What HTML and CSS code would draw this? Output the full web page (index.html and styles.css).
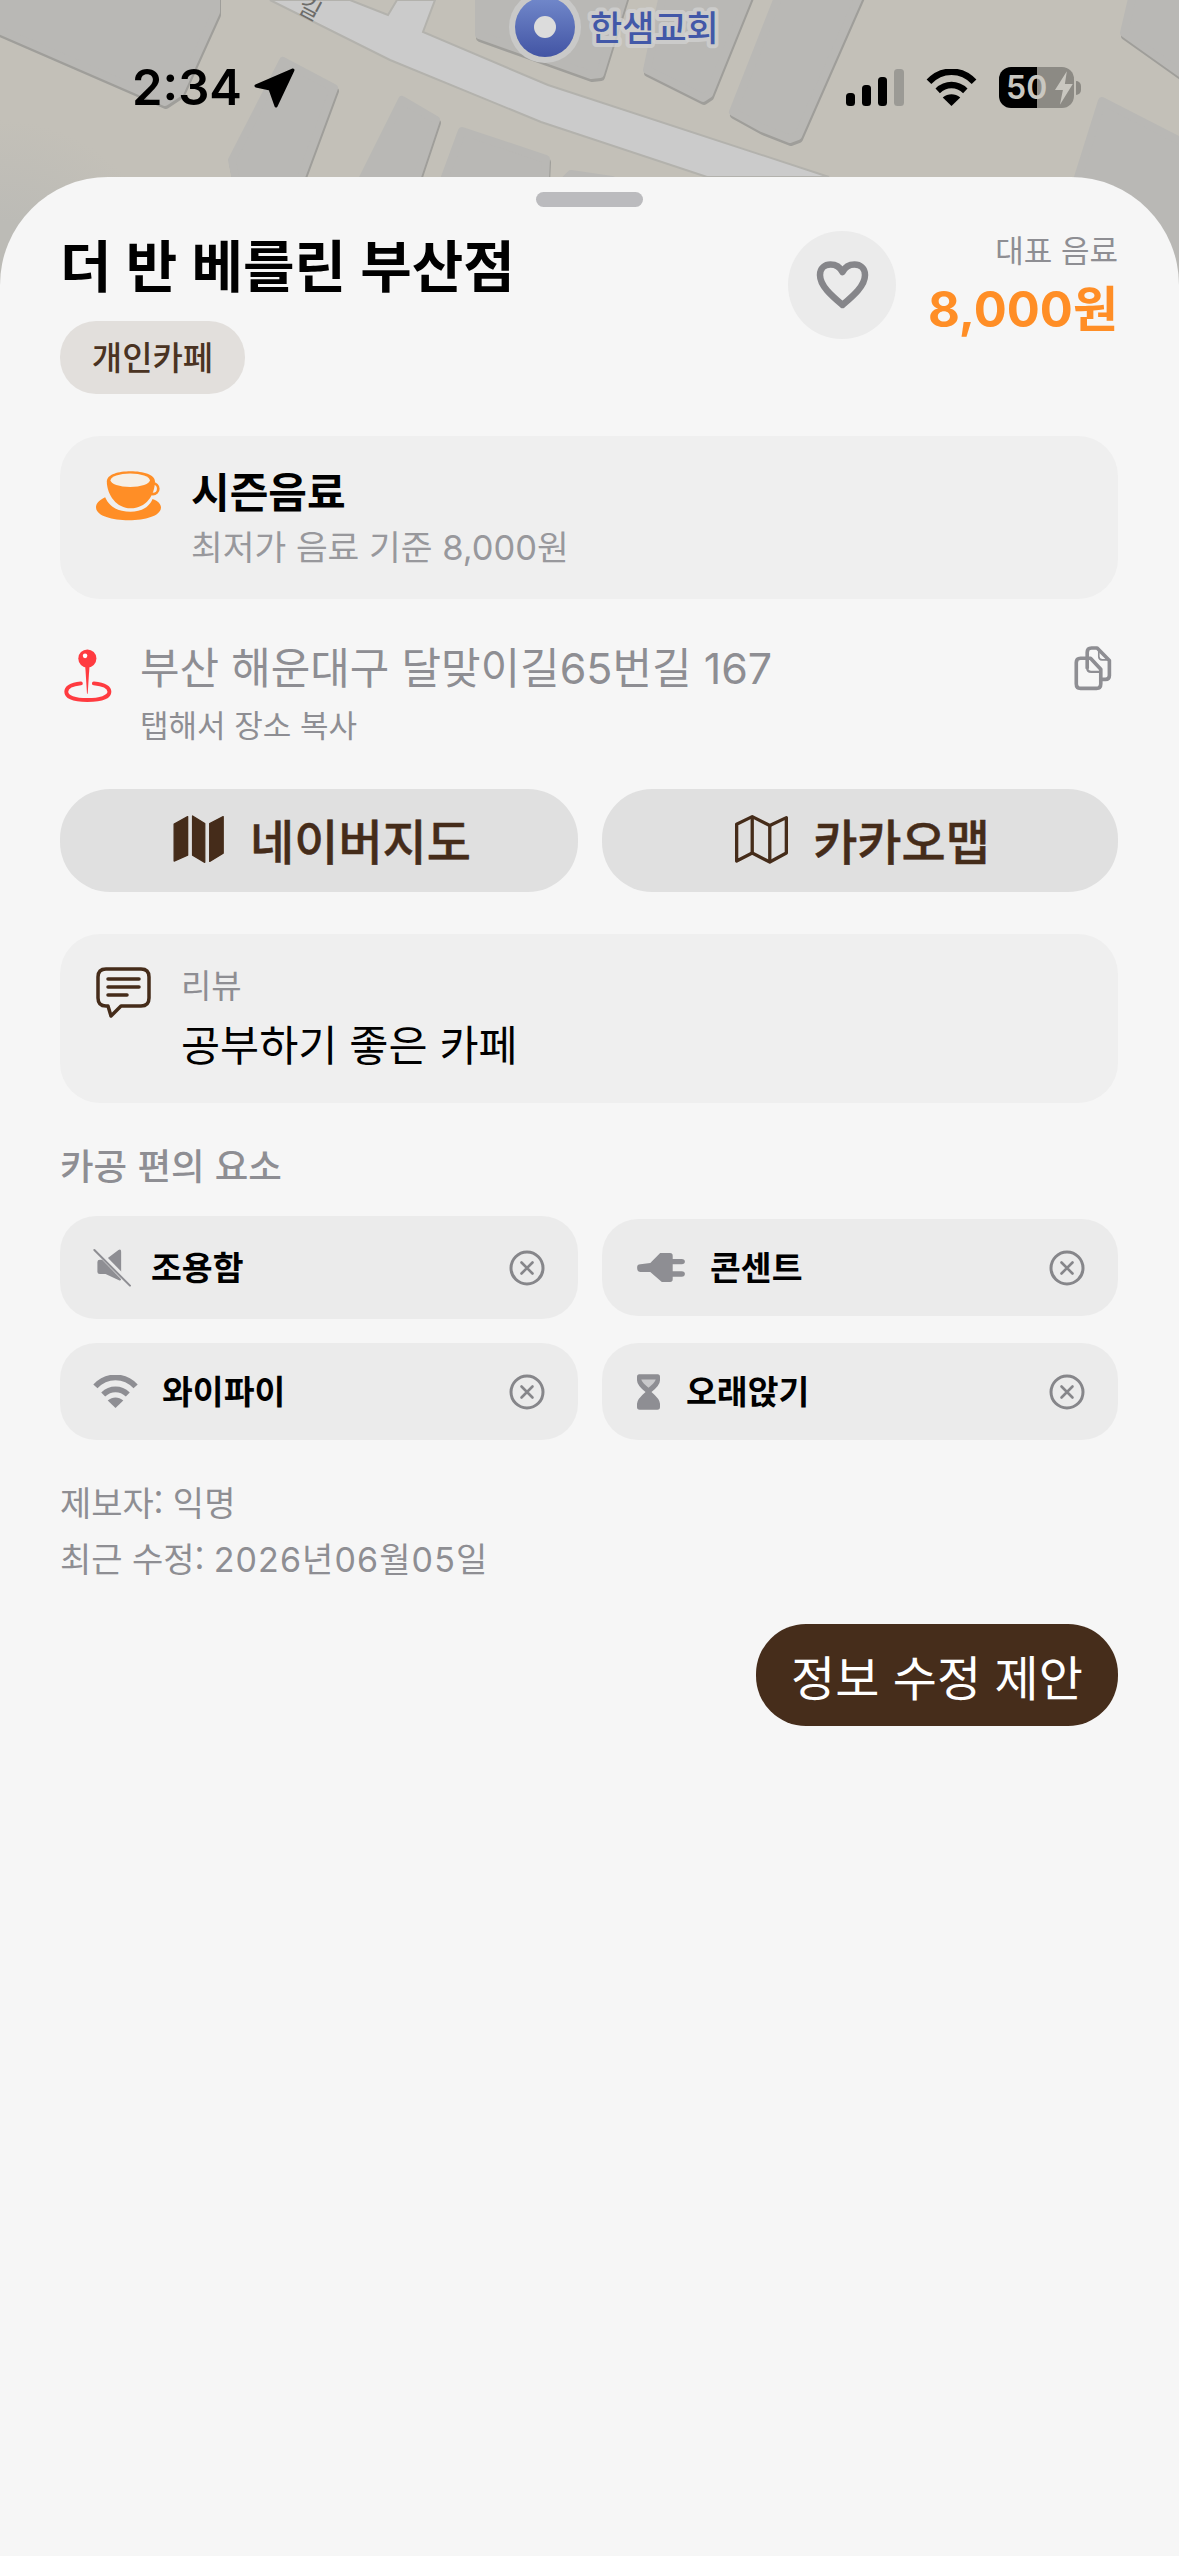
FILE: index.html
```html
<!DOCTYPE html>
<html lang="ko">

<head>
    <meta charset="UTF-8" />
    <title>더 반 베를린 부산점</title>
    <link rel="stylesheet" href="styles.css">
</head>

<body>
    <svg class="defs" width="0" height="0">
        <symbol id="wifi" viewBox="0 0 150 110">
            <path d="M8 38C45 -2 105 -2 142 38" fill="none" stroke="currentColor" stroke-width="19" />
            <path d="M34 65C58 42 92 42 116 65" fill="none" stroke="currentColor" stroke-width="19" />
            <path d="M75 110L49 85C65 72 85 72 101 85Z" fill="currentColor" />
        </symbol>
        <symbol id="close" viewBox="0 0 36 36">
            <circle cx="18" cy="18" r="16" fill="none" stroke="#86868a" stroke-width="3" />
            <path d="M12.5 12.5L23.5 23.5M23.5 12.5L12.5 23.5" stroke="#86868a" stroke-width="2.6" stroke-linecap="round" />
        </symbol>
    </svg>

    <div class="screen">
        <!-- 지도 배경 -->
        <svg class="map" viewBox="0 0 1179 320" width="1179" height="320">
            <defs>
                <linearGradient id="marker" x1="0" y1="0" x2="0" y2="1">
                    <stop offset="0" stop-color="#7289cb" />
                    <stop offset="1" stop-color="#4254a4" />
                </linearGradient>
                <radialGradient id="corner" gradientUnits="userSpaceOnUse" cx="0" cy="290" r="170">
                    <stop offset="0.4" stop-color="#bcbbb6" />
                    <stop offset="1" stop-color="#bcbbb6" stop-opacity="0" />
                </radialGradient>
                <g id="blocks" stroke-width="8" stroke-linejoin="round">
                    <polygon points="-10,-10 -10,26 165,102 180,92 216,12 216,-10" />
                    <polygon points="283,61 334,88 300,180 236,180 232,160" />
                    <polygon points="402,100 436,120 416,180 362,180" />
                    <polygon points="462,131 546,159 545,180 444,180" />
                    <polygon points="571,174 612,180 565,180" />
                    <polygon points="479,-10 479,35 591,75 600,74 626,-10" />
                    <polygon points="664,-10 647,70 703,98 709,94 751,-10" />
                    <polygon points="781,-10 733,112 762,128 790,139 798,136 862,-10" />
                    <polygon points="1134,-10 1124,33 1190,80 1190,-10" />
                    <polygon points="1102,101 1190,146 1190,330 1030,330" />
                </g>
            </defs>
            <rect width="1179" height="320" fill="#c3c0b8" />
            <rect y="120" width="170" height="200" fill="url(#corner)" />
            <polygon points="270,0 390,60 541,122 707,177 829,177 548,85 423,32 435,0 397,0 388,15 350,0" fill="#cbcbcb" stroke="#b3b2ad" stroke-width="2" />
            <use href="#blocks" x="1" y="3" fill="#9f9e9a" stroke="#9f9e9a" />
            <use href="#blocks" fill="#b9b8b5" stroke="#b9b8b5" />
            <text class="map-road" transform="translate(296 11) rotate(28)">길</text>
            <circle cx="545" cy="27" r="36" fill="#c9c9c8" />
            <circle cx="545" cy="27" r="30" fill="url(#marker)" />
            <circle cx="545" cy="27" r="11" fill="#dcdcdc" />
            <text class="map-label" x="590" y="41">한샘교회</text>
        </svg>

        <div class="status">
            <div class="status-left">
                <span class="time">2:34</span>
                <svg class="arrow" viewBox="-2 -2 43 42" width="43" height="42">
                    <polygon points="38,1 1,17 15,20 21,37" fill="#000" stroke="#000" stroke-width="3" stroke-linejoin="round" />
                </svg>
            </div>
            <div class="status-right">
                <svg class="signal" viewBox="0 0 58 37" width="58" height="37">
                    <rect x="0" y="24" width="9" height="13" rx="3.5" />
                    <rect x="16" y="16" width="9" height="21" rx="3.5" />
                    <rect x="32" y="8" width="9" height="29" rx="3.5" />
                    <rect x="48" y="0" width="10" height="37" rx="3.5" fill="#9b9a95" />
                </svg>
                <svg class="status-wifi" width="51" height="37">
                    <use href="#wifi" />
                </svg>
                <div class="battery">
                    <span>50</span>
                    <svg viewBox="0 0 20 34" width="22" height="36">
                        <polygon points="13,0 1,19 9,19 6,34 19,13 11,13" fill="#c9c7c0" />
                    </svg>
                </div>
                <div class="battery-cap"></div>
            </div>
        </div>

        <div class="sheet">
            <div class="handle"></div>

            <div class="head">
                <div class="head-main">
                    <h1 class="title">더 반 베를린 부산점</h1>
                    <span class="tag">개인카페</span>
                </div>
                <button class="like">
                    <svg viewBox="0 0 53 48" width="53" height="48">
                        <path d="M26.5 44C16 35 4 25 4 14C4 7 9 3.5 14.5 3.5C19.5 3.5 24 6 26.5 11C29 6 33.5 3.5 38.5 3.5C44 3.5 49 7 49 14C49 25 37 35 26.5 44Z" fill="none" stroke="#86868a" stroke-width="6.5" stroke-linejoin="round" />
                    </svg>
                </button>
                <div class="price">
                    <div class="price-label">대표 음료</div>
                    <div class="price-value"><span class="num">8,000</span>원</div>
                </div>
            </div>

            <div class="card card-drink">
                <svg class="cup" viewBox="48 85 192 150" width="65" height="51">
                    <path d="M75 165C55 175 48 185 48 195C48 220 95 233 145 233C195 233 240 220 240 195C240 185 230 175 215 170C205 195 180 208 150 208C115 208 88 195 75 165Z" fill="#ff8e26" />
                    <circle cx="216" cy="140" r="16" fill="none" stroke="#ff8e26" stroke-width="8" />
                    <path d="M80 118C80 97 115 88 150 88C188 88 222 98 222 118C222 160 195 198 150 198C110 198 80 160 80 118Z" fill="#ff8e26" />
                    <ellipse cx="149" cy="115" rx="58" ry="20" fill="#f5efe6" />
                </svg>
                <div>
                    <div class="drink-name">시즌음료</div>
                    <div class="drink-sub">최저가 음료 기준 <span class="num">8,000</span>원</div>
                </div>
            </div>

            <div class="place">
                <svg class="pin" viewBox="10 52 148 164" width="48" height="54">
                    <path d="M75 100H89L83 192H81Z" fill="#ff3b40" />
                    <circle cx="82" cy="83" r="28" fill="#ff3b40" />
                    <circle cx="75" cy="75" r="7" fill="#fff" />
                    <path d="M62 160C32 163 17 173 17 186C17 203 45 211 82 211C120 211 150 203 150 186C150 173 133 163 102 160" fill="none" stroke="#ff3b40" stroke-width="12" stroke-linecap="round" />
                </svg>
                <div class="place-text">
                    <div class="address">부산 해운대구 달맞이길<span class="num">65</span>번길 <span class="num">167</span></div>
                    <div class="copy-hint">탭해서 장소 복사</div>
                </div>
                <svg class="copy" viewBox="1125 70 125 145" width="42" height="48" fill="none" stroke="#8e8e93" stroke-width="11" stroke-linejoin="round">
                    <path d="M1170 145V95Q1170 82 1183 82H1200L1237 120V165Q1237 177 1225 177H1211" />
                    <path d="M1170 113H1180L1211 146V190Q1211 204 1198 204H1150Q1137 204 1137 190V126Q1137 113 1150 113Z" />
                    <path d="M1170 113V143Q1170 154 1182 154H1211" stroke-width="7" />
                    <path d="M1205 88V108Q1205 118 1215 118H1235" stroke-width="5" />
                </svg>
            </div>

            <div class="map-links">
                <button class="map-btn">
                    <svg viewBox="30 42 166 158" width="55" height="52" fill="#452c1a" stroke="#452c1a" stroke-width="4" stroke-linejoin="round">
                        <path d="M39 76L80 53V170L39 188Z" />
                        <path d="M95 51L132 74V192L95 170Z" />
                        <path d="M147 74L188 53V164L147 189Z" />
                    </svg>
                    네이버지도
                </button>
                <button class="map-btn">
                    <svg viewBox="100 585 166 155" width="55" height="52" fill="none" stroke="#452c1a" stroke-width="10" stroke-linejoin="round">
                        <path d="M108 618L155 595L208 622L258 598V705L208 732L155 705L108 729Z" />
                        <path d="M155 595V705M208 622V732" />
                    </svg>
                    카카오맵
                </button>
            </div>

            <div class="card card-review">
                <svg class="bubble" viewBox="0 0 55 51" width="55" height="51" fill="none" stroke="#452c1a" stroke-width="3.5" stroke-linejoin="round">
                    <path d="M10 2H45Q53 2 53 10V31Q53 39 45 39H25L15 49L12 39H10Q2 39 2 31V10Q2 2 10 2Z" />
                    <path d="M12 12H43M12 20H43M12 28H31" stroke-linecap="round" />
                </svg>
                <div>
                    <div class="review-label">리뷰</div>
                    <div class="review-text">공부하기 좋은 카페</div>
                </div>
            </div>

            <h2 class="section-title">카공 편의 요소</h2>

            <div class="chips">
                <div class="chip chip-tall">
                    <svg class="chip-icon" viewBox="95 145 115 115" width="39" height="39">
                        <path d="M108 186Q108 180 115 180H132L170 151Q178 147 178 156V236Q178 244 170 239L132 222H115Q108 222 108 216Z" fill="#8e8e93" />
                        <path d="M104 150L204 252" stroke="#ebebeb" stroke-width="16" />
                        <path d="M99 151L204 256" stroke="#8e8e93" stroke-width="6" stroke-linecap="round" />
                    </svg>
                    <span class="chip-name mute">조용함</span>
                    <svg class="chip-close" width="36" height="36"><use href="#close" /></svg>
                </div>
                <div class="chip">
                    <svg class="chip-icon plug-icon" viewBox="110 160 145 88" width="48" height="29">
                        <path d="M110 204Q110 194 120 194L150 190L180 160H210Q218 160 218 168V178H245Q255 178 255 186Q255 194 245 194H218V215H245Q255 215 255 223Q255 232 245 232H218V240Q218 248 210 248H185L150 218H120Q110 218 110 204Z" fill="#8e8e93" />
                    </svg>
                    <span class="chip-name plug">콘센트</span>
                    <svg class="chip-close" width="36" height="36"><use href="#close" /></svg>
                </div>
                <div class="chip">
                    <svg class="chip-icon chip-wifi" width="45" height="33">
                        <use href="#wifi" />
                    </svg>
                    <span class="chip-name wifi-name">와이파이</span>
                    <svg class="chip-close" width="36" height="36"><use href="#close" /></svg>
                </div>
                <div class="chip">
                    <svg class="chip-icon plug-icon" viewBox="110 522 70 108" width="23" height="36">
                        <path d="M117 522H173Q180 522 180 530V540Q180 555 154 576Q180 598 180 612V622Q180 630 172 630H118Q110 630 110 622V612Q110 598 136 576Q110 555 110 540V530Q110 522 117 522Z" fill="#8e8e93" />
                        <path d="M123 538H167Q164 548 145 563Q126 548 123 538Z" fill="#c9c9cb" />
                    </svg>
                    <span class="chip-name hourglass">오래앉기</span>
                    <svg class="chip-close" width="36" height="36"><use href="#close" /></svg>
                </div>
            </div>

            <div class="meta">
                <div>제보자: 익명</div>
                <div>최근 수정: <span class="date"><span class="num">2026</span>년<span class="num">06</span>월<span class="num">05</span>일</span></div>
            </div>

            <button class="suggest">정보 수정 제안</button>
        </div>
    </div>
</body>

</html>
```

FILE: styles.css
```css
* {
    box-sizing: border-box;
    font-family: "Noto Sans CJK KR", "Noto Sans", sans-serif;
}

body {
    margin: 0;
    padding: 0;
}

button {
    border: 0;
    padding: 0;
}

h1,
h2 {
    margin: 0;
}

.defs {
    position: absolute;
}

.num {
    font-family: Inter, sans-serif;
}

.screen {
    position: relative;
    width: 1179px;
    height: 2556px;
    overflow: hidden;
    background: #c3c0b8;
}

/* 지도 */

.map {
    position: absolute;
    top: 0;
    left: 0;
}

.map-road {
    font-size: 24px;
    fill: #6d6c69;
}

.map-label {
    font-size: 35px;
    font-weight: 500;
    fill: #4258a8;
    stroke: #d2d2d2;
    stroke-opacity: 0.75;
    stroke-width: 8px;
    stroke-linejoin: round;
    paint-order: stroke;
}

/* 상태바 */

.status {
    position: relative;
    display: flex;
    justify-content: space-between;
    height: 177px;
    padding: 67px 98px 0 132px;
}

.status-left {
    display: flex;
    align-items: flex-start;
    gap: 11px;
}

.time {
    font-family: Inter, sans-serif;
    font-size: 49px;
    font-weight: 600;
    line-height: 42px;
    color: #000;
}

.status-right {
    display: flex;
    align-items: flex-start;
    padding-top: 2px;
}

.status-wifi {
    margin-left: 22px;
    color: #000;
}

.battery {
    display: flex;
    align-items: center;
    gap: 7px;
    width: 75px;
    height: 41px;
    margin-left: 22px;
    margin-top: -2px;
    padding-left: 7px;
    border-radius: 12px;
    background: linear-gradient(90deg, #000 38px, #8c8a84 38px);
}

.battery span {
    font-family: Inter, sans-serif;
    font-size: 32px;
    font-weight: 600;
    line-height: 41px;
    color: #c9c7c0;
}

.battery-cap {
    width: 5px;
    height: 14px;
    margin: 12px 0 0 2px;
    border-radius: 0 7px 7px 0;
    background: #8c8a84;
}

/* 시트 */

.sheet {
    position: relative;
    display: flex;
    flex-direction: column;
    height: 2379px;
    padding: 15px 61px 0 60px;
    border-radius: 108px 108px 0 0;
    background: #f6f6f6;
}

.handle {
    width: 107px;
    height: 15px;
    margin: 0 auto;
    border-radius: 8px;
    background: #bbbbbe;
}

.head {
    display: flex;
    height: 163px;
    margin-top: 24px;
}

.head-main {
    flex: 1;
}

.title {
    margin: -3px 0 0;
    font-size: 56px;
    font-weight: 700;
    line-height: 70px;
    word-spacing: -1.5px;
    color: #000;
}

.tag {
    display: inline-block;
    width: 185px;
    height: 73px;
    margin-top: 23px;
    border-radius: 36px;
    background: #e2dfdc;
    font-size: 33px;
    font-weight: 500;
    line-height: 71px;
    text-align: center;
    color: #4a3322;
}

.like {
    display: flex;
    align-items: center;
    justify-content: center;
    width: 108px;
    height: 108px;
    border-radius: 50%;
    background: #ebebeb;
}

.price {
    width: 222px;
    text-align: right;
}

.price-label {
    font-size: 31px;
    line-height: 36px;
    color: #8e8e93;
}

.price-value {
    margin-top: 6px;
    font-size: 49px;
    font-weight: 700;
    line-height: 66px;
    color: #ff8e26;
}

.card {
    border-radius: 40px;
    background: #efefef;
}

.card-drink {
    display: flex;
    align-items: flex-start;
    gap: 30px;
    height: 163px;
    margin-top: 42px;
    padding: 34px 36px 0;
}

.drink-name {
    margin-top: -8px;
    font-size: 42px;
    font-weight: 700;
    line-height: 56px;
    color: #000;
}

.drink-sub {
    margin-top: 4px;
    font-size: 34.5px;
    line-height: 46px;
    color: #98989c;
}

.place {
    display: flex;
    align-items: flex-start;
    height: 110px;
    margin-top: 41px;
    padding: 0 4px;
}

.pin {
    margin-top: 8px;
}

.place-text {
    flex: 1;
    margin-left: 28px;
}

.address {
    margin-top: -3px;
    font-size: 43px;
    line-height: 56px;
    color: #8e8e93;
}

.copy-hint {
    margin-top: 8px;
    font-size: 31px;
    line-height: 40px;
    color: #8e8e93;
}

.copy {
    margin-top: 4px;
}

.map-links {
    display: grid;
    grid-template-columns: 518px 516px;
    gap: 24px;
    margin-top: 39px;
}

.map-btn {
    display: flex;
    align-items: center;
    justify-content: center;
    gap: 24px;
    height: 103px;
    padding: 0 0 3px 4px;
    border-radius: 50px;
    background: #e0e0e0;
    font-size: 48px;
    font-weight: 500;
    -webkit-text-stroke: 0.5px #452c1a;
    color: #452c1a;
}

.card-review {
    display: flex;
    align-items: flex-start;
    gap: 30px;
    height: 169px;
    margin-top: 42px;
    padding: 33px 36px 0;
}

.review-label {
    margin-top: -3px;
    font-size: 33px;
    line-height: 40px;
    color: #8e8e93;
}

.review-text {
    margin-top: 10px;
    font-size: 42.5px;
    line-height: 58px;
    color: #000;
}

.section-title {
    margin-top: 40px;
    font-size: 36.5px;
    font-weight: 500;
    line-height: 44px;
    color: #8e8e93;
}

.chips {
    display: grid;
    grid-template-columns: 518px 516px;
    align-items: center;
    gap: 24px;
    margin-top: 29px;
}

.chip {
    display: flex;
    align-items: center;
    height: 97px;
    padding: 0 33px 0 33px;
    border-radius: 36px;
    background: #ebebeb;
}

.chip-tall {
    height: 103px;
}

.chip-wifi {
    color: #8e8e93;
}

.plug-icon {
    margin-left: 2px;
}

.chip-name {
    flex: 1;
    padding-bottom: 5px;
    font-size: 33.5px;
    font-weight: 700;
    color: #000;
}

.mute {
    margin-left: 19px;
}

.plug {
    margin-left: 25px;
}

.wifi-name {
    margin-left: 24px;
}

.hourglass {
    margin-left: 26px;
}

.meta {
    margin-top: 34px;
    font-size: 34px;
    line-height: 56px;
    color: #8e8e93;
}

.date {
    letter-spacing: 1.1px;
}

.suggest {
    align-self: flex-end;
    width: 362px;
    height: 102px;
    margin-top: 36px;
    border-radius: 50px;
    background: #462d1b;
    font-size: 48px;
    color: #fff;
}
```
